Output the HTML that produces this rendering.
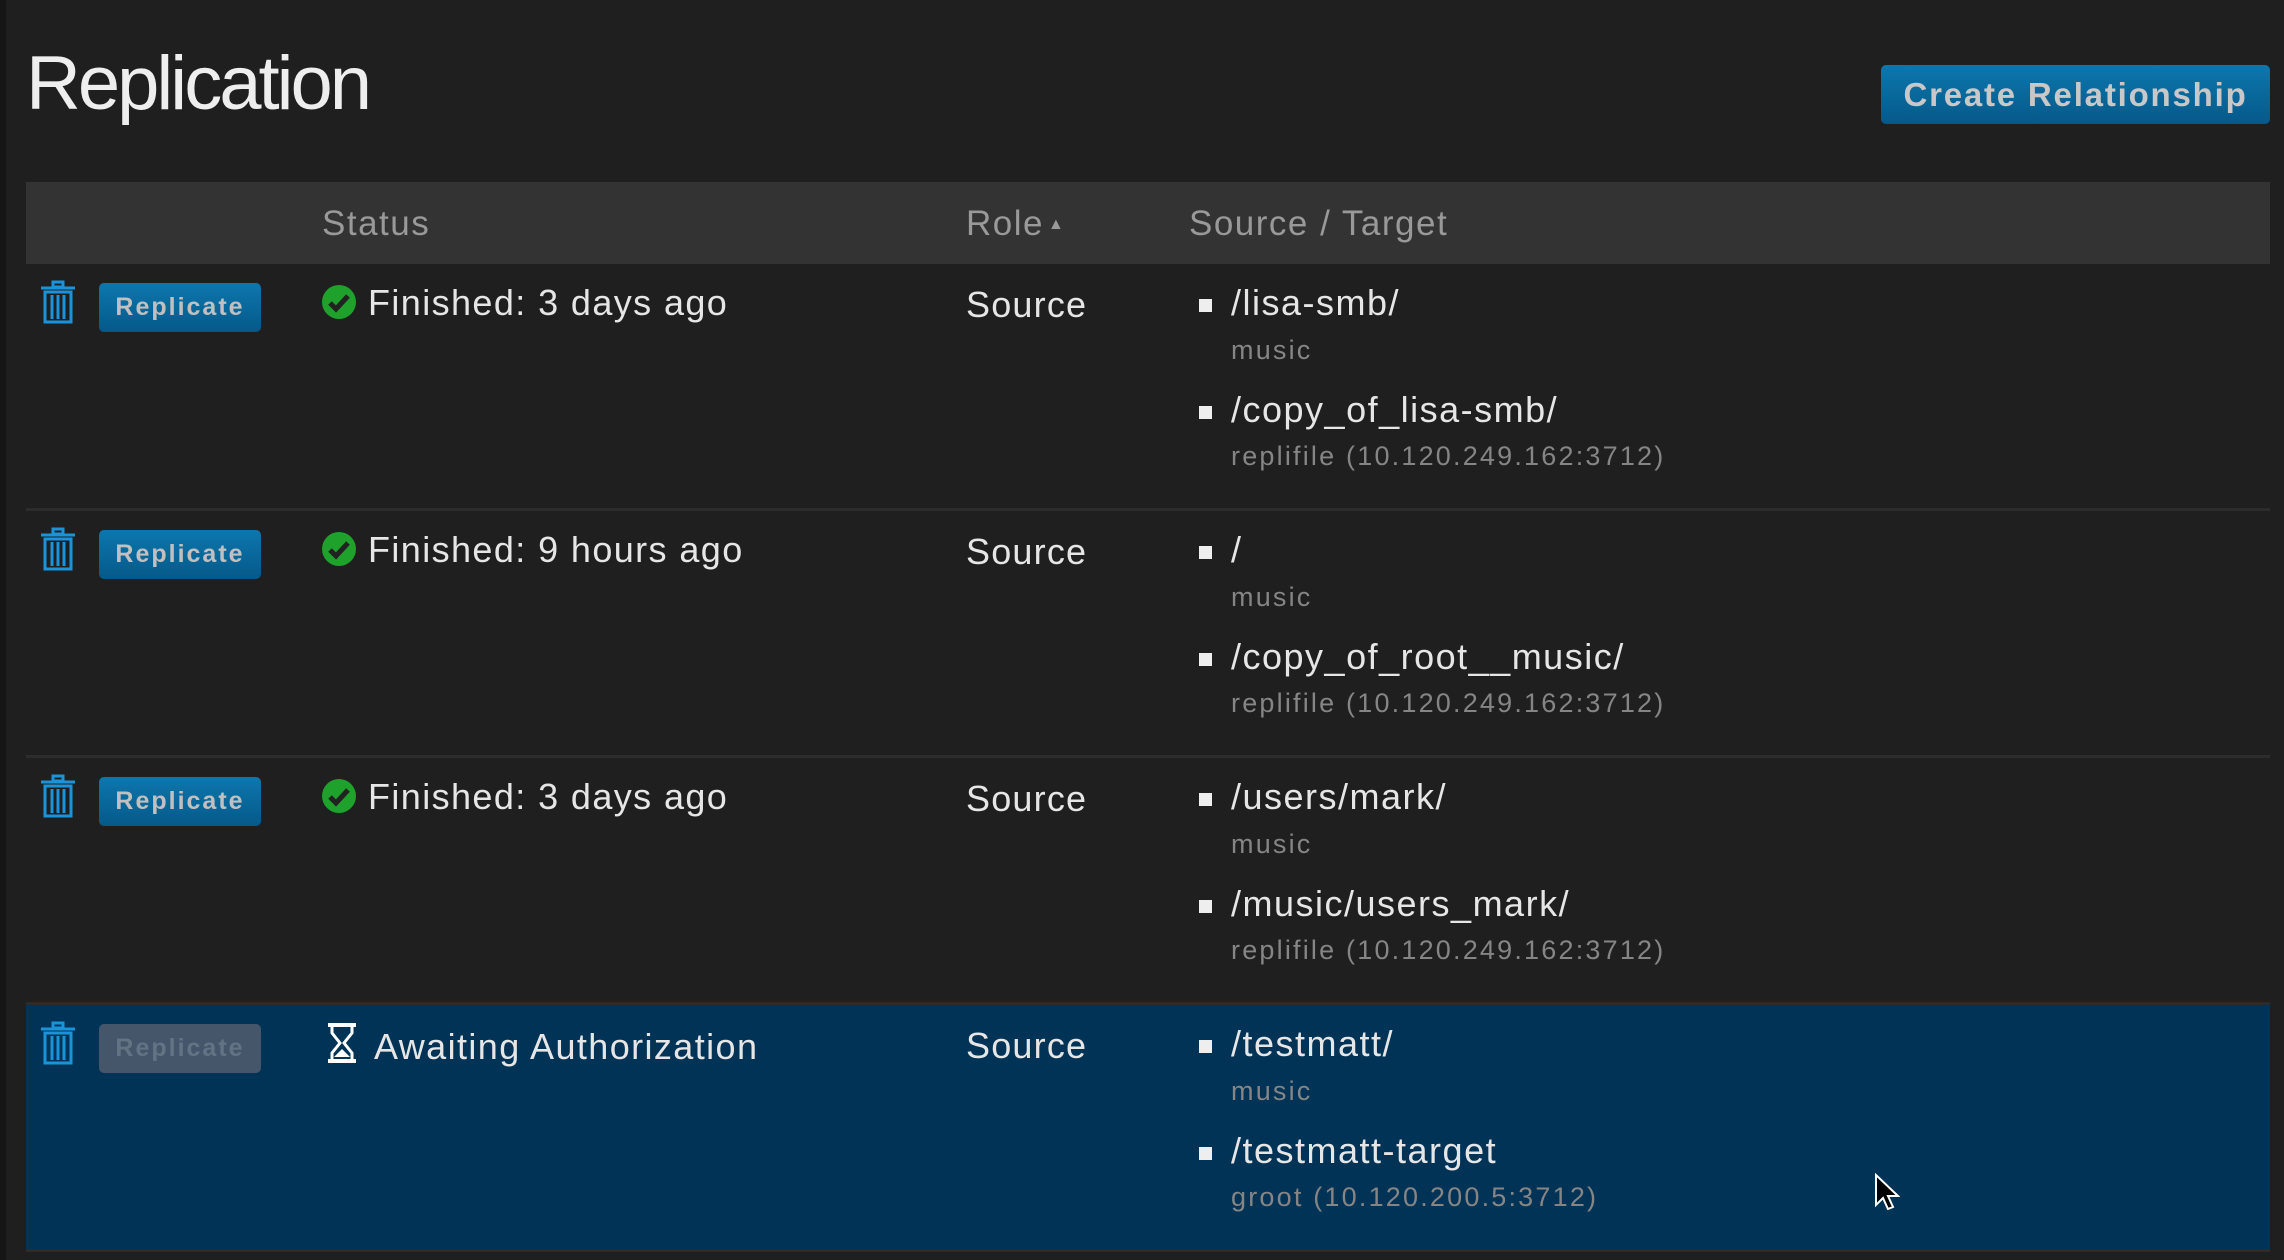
<!DOCTYPE html>
<html><head><meta charset="utf-8"><style>
*{margin:0;padding:0;box-sizing:border-box}
body{width:2284px;height:1260px;background:#1f1f1f;font-family:"Liberation Sans",sans-serif;position:relative;overflow:hidden;color:#e6e6e6}
.lb{position:absolute;left:0;top:0;width:6px;height:1260px;background:#151515}
h1{position:absolute;left:26px;top:40px;font-size:76px;font-weight:normal;color:#eee;letter-spacing:-3px}
.cr{position:absolute;left:1881px;top:65px;width:389px;height:59px;border-radius:5px;background:linear-gradient(#0d77ad,#05598a);color:#c8c8c8;font-weight:bold;font-size:33px;text-align:center;line-height:59px;letter-spacing:1.8px}
.hd{position:absolute;left:26px;top:182px;width:2244px;height:82px;background:#333}
.hd span{position:absolute;top:22px;font-size:35px;color:#999;letter-spacing:1.5px}
.row{position:absolute;left:26px;width:2244px;height:247px;border-bottom:3px solid #2c2c2c}
.row.sel{background:#003356}
.trash{position:absolute;left:15px;top:16px}
.btn{position:absolute;left:73px;top:19px;width:162px;height:49px;border-radius:5px;background:linear-gradient(#0d77ad,#05598a);color:#c0c0c0;font-weight:bold;font-size:25px;text-align:center;line-height:49px;letter-spacing:2px}
.btn.dis{background:#45566a;color:#627384}
.st{position:absolute;left:296px;top:18px;font-size:36px;color:#e6e6e6;white-space:nowrap;letter-spacing:1.4px}
.st svg{vertical-align:-4px;margin-right:12px}
.role{position:absolute;left:940px;top:20px;font-size:36px;color:#e6e6e6;letter-spacing:1.2px}
.p{position:absolute;left:1205px;font-size:36px;color:#e6e6e6;white-space:nowrap;letter-spacing:1.5px}
.p:before{content:"";position:absolute;left:-32px;top:17px;width:13px;height:13px;background:#eee}
.s{position:absolute;left:1205px;font-size:27px;color:#858585;white-space:nowrap;letter-spacing:2.2px}
</style></head><body>
<div class="lb"></div>
<h1>Replication</h1>
<div class="cr">Create Relationship</div>
<div class="hd"><span style="left:296px">Status</span><span style="left:940px">Role<span style="position:static;font-size:16px;vertical-align:6px;margin-left:4px">▲</span></span><span style="left:1163px">Source / Target</span></div>

<div class="row" style="top:264px">
<svg class="trash" width="34" height="44" viewBox="0 0 34 44"><g fill="none" stroke="#1a93d8" stroke-width="3"><rect x="12" y="2" width="10" height="5"/><line x1="0" y1="8" x2="34" y2="8"/><rect x="4" y="12" width="26" height="30"/><line x1="11" y1="15" x2="11" y2="39"/><line x1="17" y1="15" x2="17" y2="39"/><line x1="23" y1="15" x2="23" y2="39"/></g></svg>
<div class="btn">Replicate</div>
<div class="st"><svg width="34" height="34" viewBox="0 0 34 34"><circle cx="17" cy="17" r="17" fill="#1fa22c"/><path d="M8 18l6 6 12-13" stroke="#222" stroke-width="5" fill="none"/></svg>Finished: 3 days ago</div>
<div class="role">Source</div>
<div class="p" style="top:18px">/lisa-smb/</div><div class="s" style="top:71px">music</div>
<div class="p" style="top:125px">/copy_of_lisa-smb/</div><div class="s" style="top:177px">replifile (10.120.249.162:3712)</div>
</div>

<div class="row" style="top:511px">
<svg class="trash" width="34" height="44" viewBox="0 0 34 44"><g fill="none" stroke="#1a93d8" stroke-width="3"><rect x="12" y="2" width="10" height="5"/><line x1="0" y1="8" x2="34" y2="8"/><rect x="4" y="12" width="26" height="30"/><line x1="11" y1="15" x2="11" y2="39"/><line x1="17" y1="15" x2="17" y2="39"/><line x1="23" y1="15" x2="23" y2="39"/></g></svg>
<div class="btn">Replicate</div>
<div class="st"><svg width="34" height="34" viewBox="0 0 34 34"><circle cx="17" cy="17" r="17" fill="#1fa22c"/><path d="M8 18l6 6 12-13" stroke="#222" stroke-width="5" fill="none"/></svg>Finished: 9 hours ago</div>
<div class="role">Source</div>
<div class="p" style="top:18px">/</div><div class="s" style="top:71px">music</div>
<div class="p" style="top:125px">/copy_of_root__music/</div><div class="s" style="top:177px">replifile (10.120.249.162:3712)</div>
</div>

<div class="row" style="top:758px">
<svg class="trash" width="34" height="44" viewBox="0 0 34 44"><g fill="none" stroke="#1a93d8" stroke-width="3"><rect x="12" y="2" width="10" height="5"/><line x1="0" y1="8" x2="34" y2="8"/><rect x="4" y="12" width="26" height="30"/><line x1="11" y1="15" x2="11" y2="39"/><line x1="17" y1="15" x2="17" y2="39"/><line x1="23" y1="15" x2="23" y2="39"/></g></svg>
<div class="btn">Replicate</div>
<div class="st"><svg width="34" height="34" viewBox="0 0 34 34"><circle cx="17" cy="17" r="17" fill="#1fa22c"/><path d="M8 18l6 6 12-13" stroke="#222" stroke-width="5" fill="none"/></svg>Finished: 3 days ago</div>
<div class="role">Source</div>
<div class="p" style="top:18px">/users/mark/</div><div class="s" style="top:71px">music</div>
<div class="p" style="top:125px">/music/users_mark/</div><div class="s" style="top:177px">replifile (10.120.249.162:3712)</div>
</div>

<div class="row sel" style="top:1005px">
<svg class="trash" width="34" height="44" viewBox="0 0 34 44"><g fill="none" stroke="#1a93d8" stroke-width="3"><rect x="12" y="2" width="10" height="5"/><line x1="0" y1="8" x2="34" y2="8"/><rect x="4" y="12" width="26" height="30"/><line x1="11" y1="15" x2="11" y2="39"/><line x1="17" y1="15" x2="17" y2="39"/><line x1="23" y1="15" x2="23" y2="39"/></g></svg>
<div class="btn dis">Replicate</div>
<div class="st"><svg style="margin-left:6px;margin-right:18px" width="28" height="40" viewBox="0 0 28 40"><g fill="#fff"><rect x="0" y="0" width="28" height="4"/><rect x="0" y="36" width="28" height="4"/></g><path d="M4 4v6l8 10-8 10v6M24 4v6l-8 10 8 10v6" stroke="#fff" stroke-width="3" fill="none"/><path d="M6 34l8-8 8 8z" fill="#fff"/></svg>Awaiting Authorization</div>
<div class="role">Source</div>
<div class="p" style="top:18px">/testmatt/</div><div class="s" style="top:71px">music</div>
<div class="p" style="top:125px">/testmatt-target</div><div class="s" style="top:177px">groot (10.120.200.5:3712)</div>
<svg style="position:absolute;left:1848px;top:168px" width="26" height="40" viewBox="0 0 26 40"><path d="M2 2v30l7-7 5 11 5-2-5-11h10z" fill="#000" stroke="#fff" stroke-width="2"/></svg>
</div>
</body></html>
